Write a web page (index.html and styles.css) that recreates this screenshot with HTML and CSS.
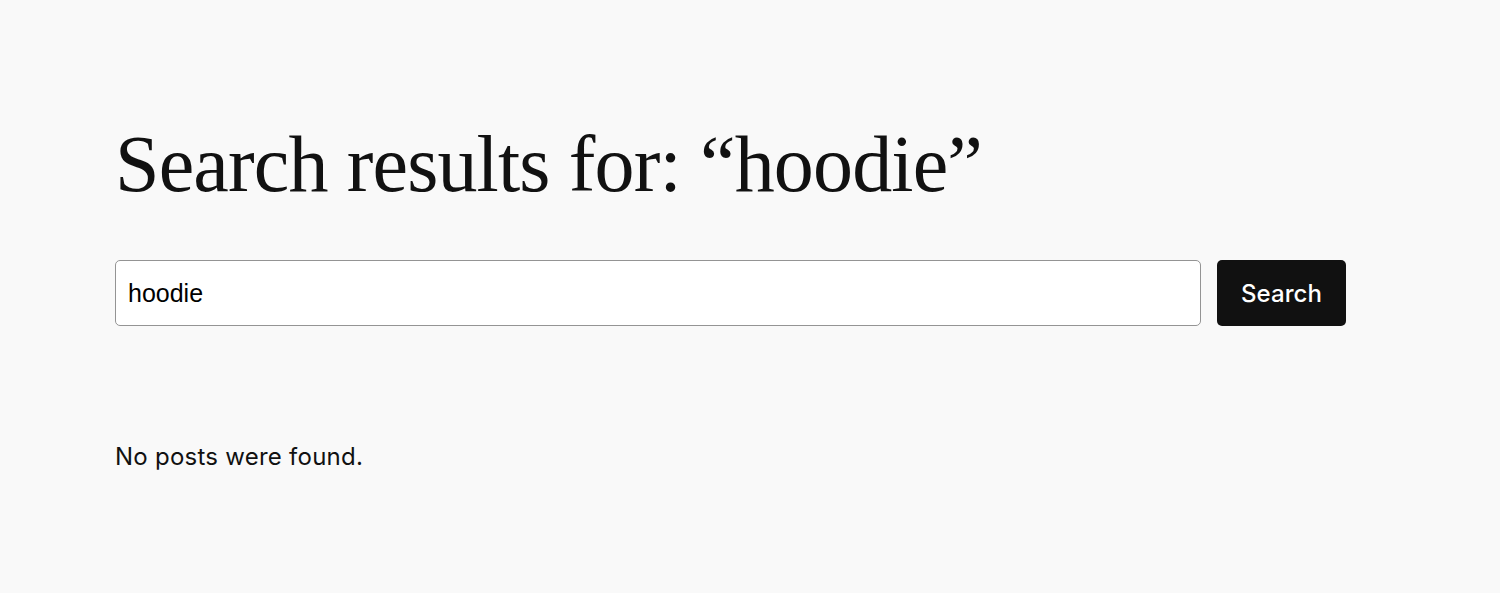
FILE: index.html
```html
<!DOCTYPE html>
<html lang="en">
<head>
<meta charset="utf-8">
<title>Search results for: “hoodie”</title>
<link rel="stylesheet" href="styles.css">
</head>
<body>
<main class="site-main">
  <h1 class="query-title">Search results for: “hoodie”</h1>
  <form class="search-form" role="search">
    <input class="search-input" type="search" name="s" value="hoodie" aria-label="Search">
    <button class="search-button" type="submit">Search</button>
  </form>
  <p class="no-results">No posts were found.</p>
</main>
</body>
</html>
```
FILE: styles.css
```css
html, body {
  margin: 0;
  padding: 0;
}

body {
  background: #f9f9f9;
  color: #111111;
  font-family: Inter, "Noto Sans", sans-serif;
}

.site-main {
  padding: 118px 115px 0 115px;
  display: flex;
  flex-direction: column;
}

.query-title {
  margin: 0;
  font-family: "Liberation Serif", "DejaVu Serif", serif;
  font-weight: 400;
  font-size: 80px;
  line-height: 1.15;
  letter-spacing: -0.85px;
  color: #111111;
}

.search-form {
  display: flex;
  gap: 16px;
  margin-top: 50px;
  width: 1231px;
}

.search-input {
  flex: 1;
  height: 66px;
  box-sizing: border-box;
  border: 1px solid #949494;
  border-radius: 5px;
  background: #ffffff;
  padding: 0 12px;
  font-family: "Liberation Sans", Arial, sans-serif;
  font-size: 25px;
  color: #000000;
  outline: none;
}

.search-button {
  width: 129px;
  height: 66px;
  border: none;
  border-radius: 5px;
  background: #111111;
  color: #ffffff;
  font-family: Inter, "Noto Sans", sans-serif;
  font-size: 24px;
  font-weight: 500;
  letter-spacing: 0.1px;
  cursor: pointer;
}

.no-results {
  margin: 114px 0 0;
  font-size: 24px;
  line-height: 1.4;
  letter-spacing: 0.25px;
  color: #111111;
}
```
